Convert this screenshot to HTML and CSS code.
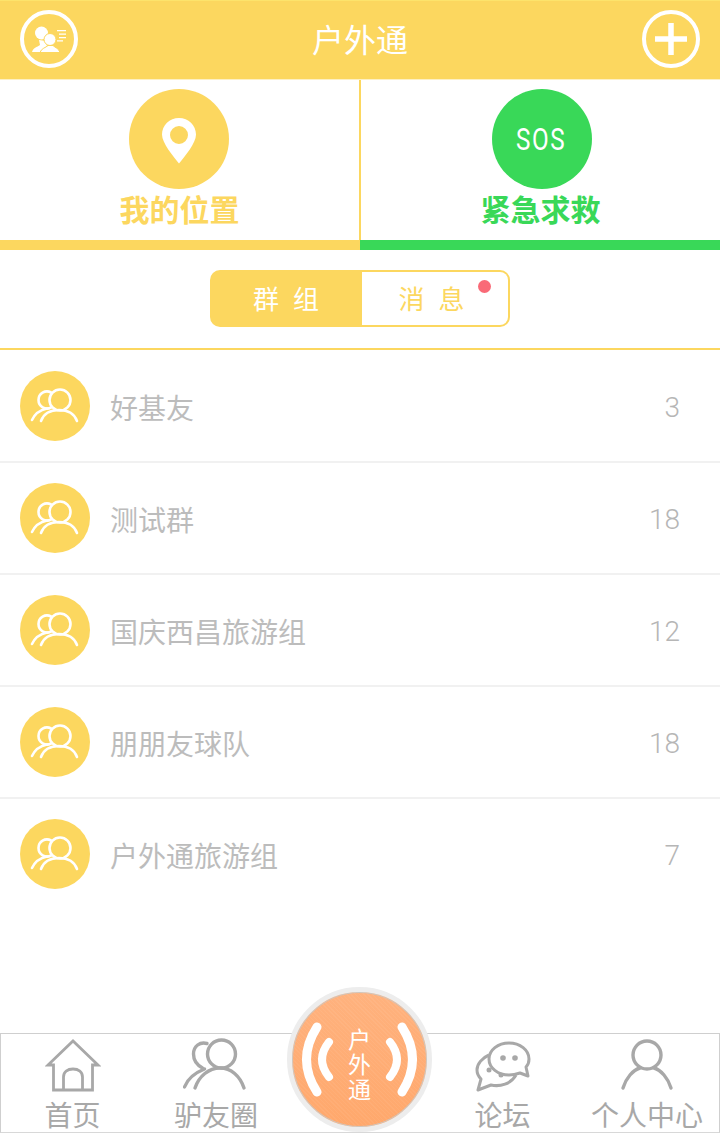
FILE: index.html
```html
<!DOCTYPE html>
<html lang="zh">
<head>
<meta charset="utf-8">
<title>户外通</title>
<link rel="stylesheet" href="styles.css">
</head>
<body>
<svg class="defs" width="0" height="0" aria-hidden="true">
  <symbol id="group" viewBox="0 0 70 70">
    <g fill="none" stroke="#fff" stroke-width="2.6" stroke-linecap="round">
      <circle cx="40" cy="29" r="10.5"/>
      <path d="M31 21.500A8.500 8.500 0 1 0 31 36.500"/>
      <path d="M12 49c2.500-5.500 8-10 15-11.500"/>
      <path d="M21 50c2.500-7 9-11 18-11s15.500 4 18 11"/>
    </g>
  </symbol>
</svg>
<div class="app">
  <header class="topbar">
    <div class="round-btn">
      <svg class="top-icon" viewBox="0 0 58 58">
        <g fill="#fff">
          <circle cx="21.500" cy="23" r="6.500"/>
          <path d="M12 42c1-4 5-5 8-7l-1-5 7 1 2 11z"/>
          <circle cx="30" cy="29.500" r="6" stroke="#FCD75F" stroke-width="1"/>
          <path d="M20 42.500c1-4 6-5 8-7h5c2 2 6 3 7 7z" stroke="#FCD75F" stroke-width="1"/>
          <path d="M37 20h9v1.300h-9zM39 23.500h7v1.300h-7zM39 27h7v1.300h-7zM37 30.300h6v1.300h-6z"/>
        </g>
      </svg>
    </div>
    <h1 class="title">户外通</h1>
    <div class="round-btn">
      <svg class="top-icon" viewBox="0 0 58 58"><path d="M13 29h32M29 13v32" stroke="#fff" stroke-width="5.500" fill="none"/></svg>
    </div>
  </header>

  <section class="actions">
    <div class="action action-yellow">
      <div class="action-main">
        <div class="disc">
          <svg class="pin" viewBox="0 0 34 46"><path fill="#fff" fill-rule="evenodd" d="M17 0C7.600 0 0 7.300 0 16.500 0 25 11 38 17 45.500 23 38 34 25 34 16.500 34 7.300 26.400 0 17 0zm0 8a9 9 0 1 1 0 18 9 9 0 0 1 0-18z"/></svg>
        </div>
        <div class="action-label">我的位置</div>
      </div>
    </div>
    <div class="action action-green">
      <div class="action-main">
        <div class="disc"><span class="sos">SOS</span></div>
        <div class="action-label">紧急求救</div>
      </div>
    </div>
  </section>

  <div class="tabs-wrap">
    <div class="tabs">
      <div class="tab tab-on">群 组</div>
      <div class="tab tab-off">消 息<span class="dot"></span></div>
    </div>
  </div>

  <ul class="groups">
    <li class="group"><span class="avatar"><svg class="avatar-icon"><use href="#group"/></svg></span><span class="name">好基友</span><span class="count">3</span></li>
    <li class="group"><span class="avatar"><svg class="avatar-icon"><use href="#group"/></svg></span><span class="name">测试群</span><span class="count">18</span></li>
    <li class="group"><span class="avatar"><svg class="avatar-icon"><use href="#group"/></svg></span><span class="name">国庆西昌旅游组</span><span class="count">12</span></li>
    <li class="group"><span class="avatar"><svg class="avatar-icon"><use href="#group"/></svg></span><span class="name">朋朋友球队</span><span class="count">18</span></li>
    <li class="group"><span class="avatar"><svg class="avatar-icon"><use href="#group"/></svg></span><span class="name">户外通旅游组</span><span class="count">7</span></li>
  </ul>

  <nav class="tabbar">
    <div class="nav-item nav-home">
      <svg class="nav-icon" viewBox="0 -1 56 56"><g fill="none" stroke="#a8a8a8" stroke-width="2.800"><path d="M8.500 51V26H3L28 2l25 24h-5.500v25z"/><path d="M18.500 51V38c0-5 4-8 9.500-8s9.500 3 9.500 8v13"/></g></svg>
      <span class="nav-label">首页</span>
    </div>
    <div class="nav-item nav-friends">
      <svg class="nav-icon" viewBox="0 -1 66 56"><g fill="none" stroke="#a8a8a8" stroke-width="3.400" stroke-linecap="round"><circle cx="38.500" cy="15" r="14"/><path d="M24 4.500C17 2.500 10.500 7 10.500 15c0 6 3.500 11 9 14"/><path d="M1.500 48c3-8 10-14 20-18"/><path d="M12 49c4-12 14-20 25-20s20 8 24 20"/></g></svg>
      <span class="nav-label">驴友圈</span>
    </div>
    <div class="nav-spacer"></div>
    <div class="nav-item nav-forum">
      <svg class="nav-icon" viewBox="0 -2 56 56"><g fill="none" stroke="#a8a8a8" stroke-width="3" stroke-linejoin="round"><path d="M34 3c-11 0-20 7-20 16 0 9 9 16 20 16 4 0 8-1 11-2l8 3-2-9c2-2 3-5 3-8 0-9-9-16-20-16z"/><path d="M14 15C7 18 2 24 2 30c0 4 2 7 4 9l-3 11 13-5c9 2 20-1 25-10"/></g><g fill="#a8a8a8"><circle cx="28" cy="18" r="2.800"/><circle cx="40" cy="18" r="2.800"/><circle cx="14" cy="30" r="2.500"/><circle cx="26" cy="35" r="2.500"/></g></svg>
      <span class="nav-label">论坛</span>
    </div>
    <div class="nav-item nav-me">
      <svg class="nav-icon" viewBox="0 0 56 56"><g fill="none" stroke="#a8a8a8" stroke-width="3.400" stroke-linecap="round"><circle cx="28" cy="17" r="14"/><path d="M4 50c3-10 10-18 17-20M52 50c-3-10-10-18-17-20"/></g></svg>
      <span class="nav-label">个人中心</span>
    </div>
    <div class="hub">
      <svg class="waves" viewBox="0 0 135 135"><g fill="none" stroke="#fff" stroke-linecap="round"><path d="M25 35Q4 67.500 25 100" stroke-width="9"/><path d="M37 50Q23 67.500 37 85" stroke-width="8"/><path d="M110 35Q131 67.500 110 100" stroke-width="9"/><path d="M98 50Q112 67.500 98 85" stroke-width="8"/></g></svg>
      <span class="hub-text">户<br>外<br>通</span>
    </div>
  </nav>
</div>
</body>
</html>
```
FILE: styles.css
```css
* { box-sizing: border-box; }
html, body { margin: 0; padding: 0; }
body {
  background: #fff;
  font-family: "Noto Sans CJK SC", "Noto Sans", sans-serif;
}
.defs { display: block; height: 0; }
.app {
  width: 720px;
  height: 1133px;
  display: flex;
  flex-direction: column;
  overflow: hidden;
}
.topbar {
  height: 80px;
  flex: none;
  background: #FCD75F;
  border-top: 1px solid #FDE36B;
  border-bottom: 1px solid #FDF0C4;
  padding: 0 20px 2px;
  display: flex;
  align-items: center;
  justify-content: space-between;
}
.title {
  margin: -2px 0 0;
  font-size: 32px;
  line-height: 40px;
  font-weight: 400;
  color: #fff;
}
.round-btn {
  width: 58px;
  height: 58px;
  border: 4px solid #fff;
  border-radius: 50%;
  display: flex;
  align-items: center;
  justify-content: center;
}
.top-icon { width: 58px; height: 58px; flex: none; }

.actions { display: flex; height: 170px; flex: none; }
.action {
  width: 360px;
  display: flex;
  flex-direction: column;
  border-bottom: 10px solid;
}
.action-yellow { border-color: #FCD75F; color: #FCD75F; }
.action-green { border-color: #39D858; color: #39D858; }
.action-main {
  height: 160px;
  padding-top: 9px;
  display: flex;
  flex-direction: column;
  align-items: center;
}
.action-yellow .action-main { border-right: 1px solid #FCD75F; }
.action-green .action-main { border-left: 1px solid #FCD75F; }
.disc {
  width: 100px;
  height: 100px;
  border-radius: 50%;
  background: currentColor;
  display: flex;
  align-items: center;
  justify-content: center;
}
.action-yellow .disc { margin-right: 2px; }
.action-green .disc { margin-left: 2px; }
.pin { width: 34px; height: 46px; margin-top: 4px; }
.sos {
  font-family: Roboto, sans-serif;
  font-size: 31px;
  letter-spacing: 2px;
  color: #fff;
  line-height: 31px;
  transform: scaleX(.78);
}
.action-label {
  font-size: 30px;
  line-height: 42px;
  font-weight: 700;
  margin-top: -2px;
}

.tabs-wrap {
  height: 100px;
  flex: none;
  padding-top: 20px;
  border-bottom: 2px solid #FCD75F;
  display: flex;
  justify-content: center;
  align-items: flex-start;
}
.tabs { display: flex; width: 300px; height: 57px; }
.tab {
  width: 150px;
  height: 57px;
  display: flex;
  align-items: center;
  justify-content: center;
  font-size: 26px;
  letter-spacing: 4px;
  padding-bottom: 3px;
  position: relative;
}
.tab-on {
  width: 152px;
  padding-left: 4px;
  background: #FCD75F;
  color: #fff;
  border-radius: 10px 0 0 10px;
}
.tab-off {
  width: 148px;
  padding-right: 3px;
  color: #FCD75F;
  border: 2px solid #FCD75F;
  border-left: 0;
  border-radius: 0 10px 10px 0;
}
.dot {
  position: absolute;
  top: 8px;
  right: 17px;
  width: 13px;
  height: 13px;
  border-radius: 50%;
  background: #F96A77;
}

.groups { list-style: none; margin: 0; padding: 1px 0 0; flex: 1; }
.group {
  height: 112px;
  padding: 0 40px 0 20px;
  display: flex;
  align-items: center;
  border-bottom: 2px solid #F1F1F1;
}
.group:last-child { border-bottom-color: transparent; }
.avatar {
  width: 70px;
  height: 70px;
  border-radius: 50%;
  background: #FCD75F;
  flex: none;
}
.avatar-icon { display: block; width: 70px; height: 70px; }
.name {
  margin: 2px 0 0 20px;
  flex: 1;
  font-size: 28px;
  color: #BCBCBC;
}
.count {
  margin-top: 2px;
  font-family: Roboto, sans-serif;
  font-weight: 300;
  font-size: 28px;
  color: #B6B6B6;
}

.tabbar {
  height: 100px;
  flex: none;
  border: 1px solid #CFCFCF;
  border-bottom-color: #D8D8D8;
  display: flex;
  position: relative;
}
.nav-item {
  display: flex;
  flex-direction: column;
  align-items: center;
  padding-top: 4px;
}
.nav-spacer { flex: 1; }
.nav-icon { width: 56px; height: 56px; flex: none; }
.nav-friends .nav-icon { width: 66px; }
.nav-label {
  font-size: 28px;
  line-height: 40px;
  color: #A8A8A8;
  white-space: nowrap;
}
.nav-home { width: 143px; }
.nav-friends { width: 144px; }
.nav-forum { width: 145px; }
.nav-me { width: 144px; }
.hub {
  position: absolute;
  left: 286px;
  top: -47px;
  width: 145px;
  height: 145px;
  border-radius: 50%;
  background:
    repeating-linear-gradient(45deg, rgba(255,255,255,.05) 0 1px, transparent 1px 3px),
    linear-gradient(#FFB27E, #FFA86C);
  border: 5px solid #EDEDED;
  box-shadow: inset 0 0 0 1px #CFC6BE;
  display: flex;
  align-items: center;
  justify-content: center;
}
.waves { position: absolute; left: 0; top: 0; width: 135px; height: 135px; }
.hub-text {
  position: relative;
  font-size: 23px;
  line-height: 25px;
  color: #fff;
  text-align: center;
  margin-top: 8px;
}
```
